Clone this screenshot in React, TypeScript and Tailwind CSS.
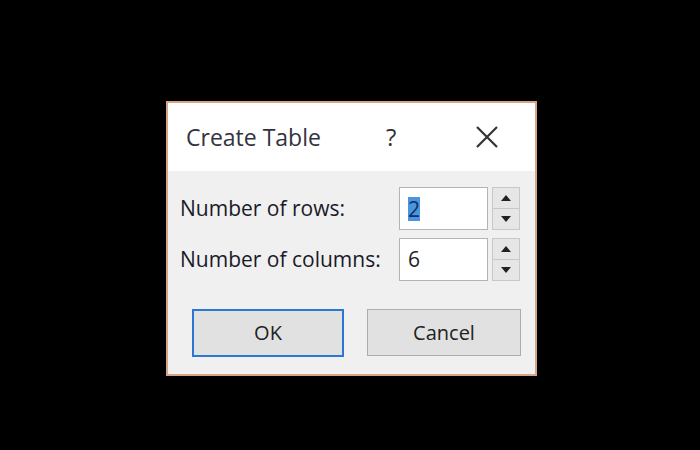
function Spinner() {
  return (
    <div className="flex h-[43px] w-[28px] flex-col border border-[#c8c8c8] bg-[#e6e6e6]">
      <div className="flex flex-1 items-center justify-center border-b border-[#c8c8c8]">
        <svg width="10" height="6" viewBox="0 0 10 6"><path d="M0 6 L5 0 L10 6 Z" fill="#222" /></svg>
      </div>
      <div className="flex flex-1 items-center justify-center">
        <svg width="10" height="6" viewBox="0 0 10 6"><path d="M0 0 L5 6 L10 0 Z" fill="#222" /></svg>
      </div>
    </div>
  );
}

function NumberRow({ label, value, selected }: { label: string; value: string; selected?: boolean }) {
  return (
    <div className="flex h-[43px] items-center">
      <div className="w-[219px] text-[21px] text-[#1a1a28]">{label}</div>
      <div className="flex h-[43px] w-[89px] items-center border border-[#b4b4b4] bg-white pl-[8px] text-[21px] text-[#222]">
        <span className={selected ? 'bg-[#4a95dc] text-[#10306a] leading-[24px]' : ''}>{value}</span>
      </div>
      <div className="ml-[4px]"><Spinner /></div>
    </div>
  );
}

export default function App() {
  return (
    <div
      className="h-[450px] w-[700px] bg-black pl-[166px] pt-[101px]"
      style={{ fontFamily: '"Open Sans", "Noto Sans", sans-serif' }}
    >
      <div className="flex h-[275px] w-[371px] flex-col border-2 border-[#d9a385] bg-[#f0f0f0]">
        <div className="flex h-[68px] items-center bg-white pl-[18px]">
          <span className="w-[200px] text-[23px] text-[#333340]">Create Table</span>
          <span className="text-[24px] text-[#333]">?</span>
          <svg className="ml-[80px]" width="22" height="22" viewBox="0 0 22 22">
            <path d="M1 1 L21 21 M21 1 L1 21" stroke="#333" strokeWidth="2.2" />
          </svg>
        </div>
        <div className="flex flex-col gap-[8px] pl-[12px] pt-[16px]">
          <NumberRow label="Number of rows:" value="2" selected />
          <NumberRow label="Number of columns:" value="6" />
        </div>
        <div className="mt-[28px] flex gap-[23px] pl-[24px]">
          <button className="h-[48px] w-[152px] border-2 border-[#2a78d4] bg-[#e1e1e1] text-[20px] text-[#222]">
            OK
          </button>
          <button className="h-[47px] w-[154px] border border-[#adadad] bg-[#e1e1e1] text-[20px] text-[#222]">
            Cancel
          </button>
        </div>
      </div>
    </div>
  );
}
